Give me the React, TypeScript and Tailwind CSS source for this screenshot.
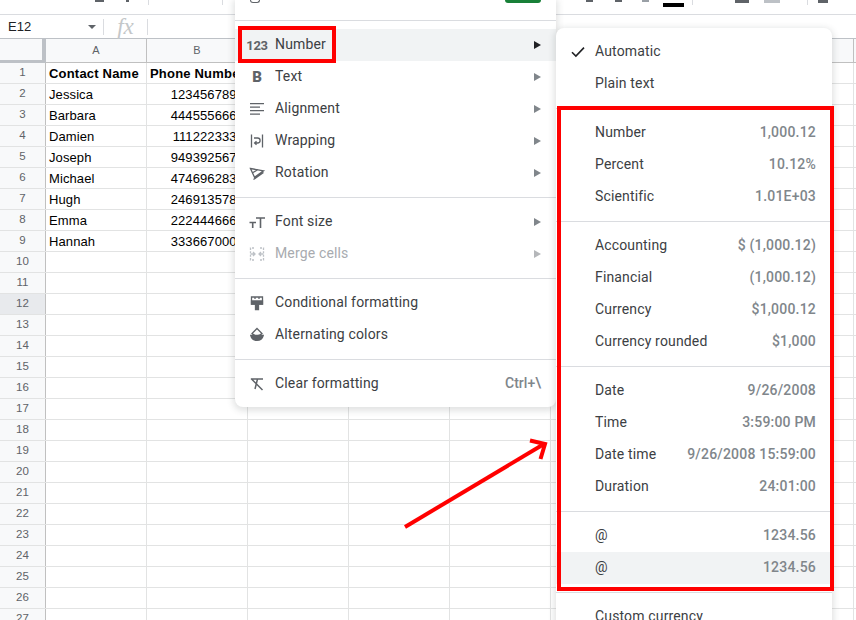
const COLS = ["A", "B", "C", "D", "E", "F", "G", "H", "I"];
const ROWS = Array.from({ length: 27 }, (_, i) => i + 1);
const DATA: Record<number, [string, string]> = {
  1: ["Contact Name", "Phone Number"],
  2: ["Jessica", "1234567890"],
  3: ["Barbara", "4445556666"],
  4: ["Damien", "1112223333"],
  5: ["Joseph", "9493925670"],
  6: ["Michael", "4746962830"],
  7: ["Hugh", "2469135780"],
  8: ["Emma", "2224446660"],
  9: ["Hannah", "3336670000"],
};

const FORMATS: [string, string][][] = [
  [["Number", "1,000.12"], ["Percent", "10.12%"], ["Scientific", "1.01E+03"]],
  [["Accounting", "$ (1,000.12)"], ["Financial", "(1,000.12)"], ["Currency", "$1,000.12"], ["Currency rounded", "$1,000"]],
  [["Date", "9/26/2008"], ["Time", "3:59:00 PM"], ["Date time", "9/26/2008 15:59:00"], ["Duration", "24:01:00"]],
  [["@", "1234.56"], ["@", "1234.56"]],
];

function Glyph({ children, faded }: { children: React.ReactNode; faded?: boolean }) {
  return (
    <svg viewBox="0 0 18 18" className={faded ? "w-[18px] h-[18px] text-[#bdc1c6]" : "w-[18px] h-[18px] text-[#5f6368]"} fill="none" stroke="currentColor" strokeWidth="1.3">
      {children}
    </svg>
  );
}

function MenuRow({ icon, label, arrow, hover, faded, shortcut }: { icon: React.ReactNode; label: string; arrow?: boolean; hover?: boolean; faded?: boolean; shortcut?: string }) {
  return (
    <div className={`h-8 flex items-center pl-[13px] pr-[15px] ${hover ? "bg-[#f1f3f4]" : ""}`}>
      <div className="w-[18px] h-[18px] flex items-center justify-center shrink-0">{icon}</div>
      <span className={`ml-[9px] mb-[2px] flex-1 tracking-[0.15px] ${faded ? "text-[#a8abaf]" : "text-[#3c4043]"}`}>{label}</span>
      {shortcut && <span className="mb-[2px] text-[#80868b] font-medium">{shortcut}</span>}
      {arrow && <div className={`w-0 h-0 border-y-[4px] border-y-transparent border-l-[7px] ${hover ? "border-l-[#202124]" : faded ? "border-l-[#b5b7ba]" : "border-l-[#80868b]"}`} />}
    </div>
  );
}

function Divider() {
  return <div className="h-px my-2 bg-[#dadce0]" />;
}

function FormatRow({ label, value, hover, check }: { label?: string; value?: string; hover?: boolean; check?: boolean }) {
  return (
    <div className={`h-8 flex items-center pl-[15px] pr-4 ${hover ? "bg-[#f1f3f4]" : ""}`}>
      <div className="w-[24px] shrink-0">
        {check && (
          <svg viewBox="0 0 14 12" className="w-[14px] h-3 text-[#202124]" fill="none" stroke="currentColor" strokeWidth="1.6">
            <path d="M1 6.2l3.9 3.9L13 1.6" />
          </svg>
        )}
      </div>
      <span className="flex-1 mb-[2px] text-[#3c4043] tracking-[0.15px]">{label}</span>
      <span className="mb-[2px] text-[#80868b] font-medium tracking-[0.2px]">{value}</span>
    </div>
  );
}

export default function App() {
  return (
    <div className="relative w-[856px] h-[620px] overflow-hidden bg-white font-['Roboto',sans-serif] text-[14px]">
      {/* toolbar, only its lower edge is in view */}
      <div className="h-[15px] border-b border-[#dadce0] flex items-start relative">
        <div className="ml-[95px] w-[9px] h-[2px] bg-[#5f6368]" />
        <div className="ml-[22px] w-[3px] h-[2px] bg-[#5f6368]" />
        <div className="ml-[19px] w-px h-[5px] bg-[#dadce0]" />
        <div className="ml-[73px] w-px h-[5px] bg-[#dadce0]" />
        <div className="ml-[363px] w-[7px] h-[2px] bg-[#5f6368]" />
        <div className="ml-[22px] w-[7px] h-[2px] bg-[#5f6368]" />
        <div className="ml-[20px] w-[7px] h-[2px] bg-[#9aa0a6]" />
        <div className="ml-[14px] mt-[3px] w-[21px] h-[4px] bg-black" />
        <div className="ml-[8px] w-px h-[5px] bg-[#dadce0]" />
        <div className="ml-[42px] w-[14px] h-[3px] bg-[#5f6368]" />
        <div className="ml-[15px] w-[16px] h-[3px] bg-[#bdc1c6]" />
        <div className="ml-[27px] w-px h-[5px] bg-[#dadce0]" />
        <div className="ml-[10px] w-[10px] h-[3px] bg-[#5f6368]" />
      </div>

      {/* formula bar */}
      <div className="h-6 flex items-center border-b border-[#bdc1c6] font-['Liberation_Sans',sans-serif] text-[13px]">
        <div className="w-[103px] pl-2 flex items-center justify-between pr-[7px] text-[#202124]">
          E12
          <div className="w-0 h-0 border-x-[4px] border-x-transparent border-t-[4px] border-t-[#5f6368]" />
        </div>
        <div className="w-px h-[16px] bg-[#dadce0]" />
        <div className="w-[43px] text-center text-[#c4c7c9] font-['Liberation_Serif',serif] italic text-[23px] leading-none">fx</div>
        <div className="w-px h-[16px] bg-[#dadce0]" />
      </div>

      {/* sheet */}
      <div className="font-['Liberation_Sans',sans-serif] text-[13px] text-black">
        <div className="flex h-6 bg-[#f8f9fa] border-b border-[#c0c0c0]">
          <div className="w-[46px] shrink-0 border-r-[4px] border-b-[3px] border-[#bdc1c6] h-6" />
          {COLS.map((c, i) => (
            <div key={c} className="w-[101px] shrink-0 border-r border-[#c0c0c0] flex items-center justify-center text-[11px] text-[#5f6368]">{i < 2 && c}</div>
          ))}
        </div>
        {ROWS.map((r) => (
          <div key={r} className="flex h-[21px] border-b border-[#e2e3e3]">
            <div className={`w-[46px] shrink-0 border-r border-[#c0c0c0] flex items-center justify-center text-[11.5px] text-[#5f6368] ${r === 12 ? "bg-[#e8eaed]" : "bg-[#f8f9fa]"}`}>{r}</div>
            {COLS.map((c, i) => (
              <div key={c} className={`w-[101px] shrink-0 border-r border-[#e2e3e3] pl-[3px] pr-[3px] pt-px flex items-center whitespace-nowrap ${r === 1 ? "font-bold tracking-[0.2px]" : "tracking-[0.1px]"} ${i === 1 && r > 1 ? "justify-end" : ""}`}>
                {i < 2 && DATA[r] ? DATA[r][i] : ""}
              </div>
            ))}
          </div>
        ))}
      </div>

      {/* format menu */}
      <div className="absolute left-[235px] top-0 w-[321px] bg-white rounded-b-lg shadow-[0_2px_6px_2px_rgba(60,64,67,0.15)] pb-[7px]">
        <div className="h-[3px] mb-[17px] flex">
          <div className="ml-[15px] w-[10px] h-[3px] border-b border-x border-[#5f6368] rounded-b-full" />
          <div className="ml-[245px] w-[36px] h-[3px] rounded-b-lg bg-[#188038]" />
        </div>
        <Divider />
        <MenuRow hover arrow label="Number" icon={<span className="text-[13px] leading-none font-bold text-[#5f6368] tracking-[-0.3px]">123</span>} />
        <MenuRow arrow label="Text" icon={<span className="text-[15px] leading-none font-black text-[#5f6368]">B</span>} />
        <MenuRow arrow label="Alignment" icon={<Glyph><path d="M2 3.700h14M2 7.200h10M2 10.700h14M2 14.200h10" /></Glyph>} />
        <MenuRow arrow label="Wrapping" icon={<Glyph><path d="M3.500 2.500v13M14.500 2.500v13" /><path d="M6 6h3.600a2.200 2.200 0 010 5H7M8.500 9.200L6.600 11l1.900 1.800" /></Glyph>} />
        <MenuRow arrow label="Rotation" icon={<Glyph><path d="M2.500 4.500l13 2.400-9 6.400zM10 5.500L5 8.500M5.500 15.500l10-7" /></Glyph>} />
        <Divider />
        <MenuRow arrow label="Font size" icon={<Glyph><path strokeWidth="1.6" d="M8 5h9M12.500 5v10M1.500 9.500h6.500M4.700 9.500V15" /></Glyph>} />
        <MenuRow faded arrow label="Merge cells" icon={<Glyph faded><path strokeDasharray="2 1.4" d="M6 3H2.500v12H6M12 3h3.500v12H12" /><path d="M2.500 9h4M5 7l2 2-2 2M15.500 9h-4M13 7l-2 2 2 2" /></Glyph>} />
        <Divider />
        <MenuRow label="Conditional formatting" icon={<Glyph><path d="M3.500 3h11v7h-11z" /><path fill="currentColor" d="M3.500 7h11v3h-11zM7.500 10h3v5.500h-3z" /><path d="M7 3v2M11 3v2" /></Glyph>} />
        <MenuRow label="Alternating colors" icon={<Glyph><path d="M9 2.500l5 5a6.500 6.500 0 01-10 0z" /><path fill="currentColor" d="M2.800 9.500h12.400a6.400 6.400 0 01-12.400 0z" /></Glyph>} />
        <Divider />
        <MenuRow label="Clear formatting" shortcut="Ctrl+\" icon={<Glyph><path strokeWidth="1.5" d="M4 4h11M9.500 4L7 14M3 3.500l11.500 11.500" /></Glyph>} />
      </div>

      {/* number format submenu */}
      <div className="absolute left-[556px] top-[28px] w-[276px] h-[620px] bg-white rounded-lg shadow-[0_2px_6px_2px_rgba(60,64,67,0.15)] pt-[8px]">
        <FormatRow check label="Automatic" />
        <FormatRow label="Plain text" />
        {FORMATS.map((group, g) => (
          <div key={g}>
            <Divider />
            {group.map(([label, value], i) => (
              <FormatRow key={label + i} label={label} value={value} hover={g === 3 && i === 1} />
            ))}
          </div>
        ))}
        <Divider />
        <FormatRow label="Custom currency" />
      </div>

      {/* annotations */}
      <div className="absolute left-[238px] top-[26px] w-[98px] h-[37px] border-4 border-[#ff0000]" />
      <div className="absolute left-[557px] top-[106px] w-[277px] h-[485px] border-4 border-[#ff0000]" />
      <svg className="absolute left-[400px] top-[435px] w-[150px] h-[100px]" viewBox="0 0 150 100" fill="none" stroke="#ff0000" strokeWidth="4">
        <path d="M5 92L144 9" />
        <path d="M130 5.500l15 3.500-4.500 15" />
      </svg>
    </div>
  );
}
